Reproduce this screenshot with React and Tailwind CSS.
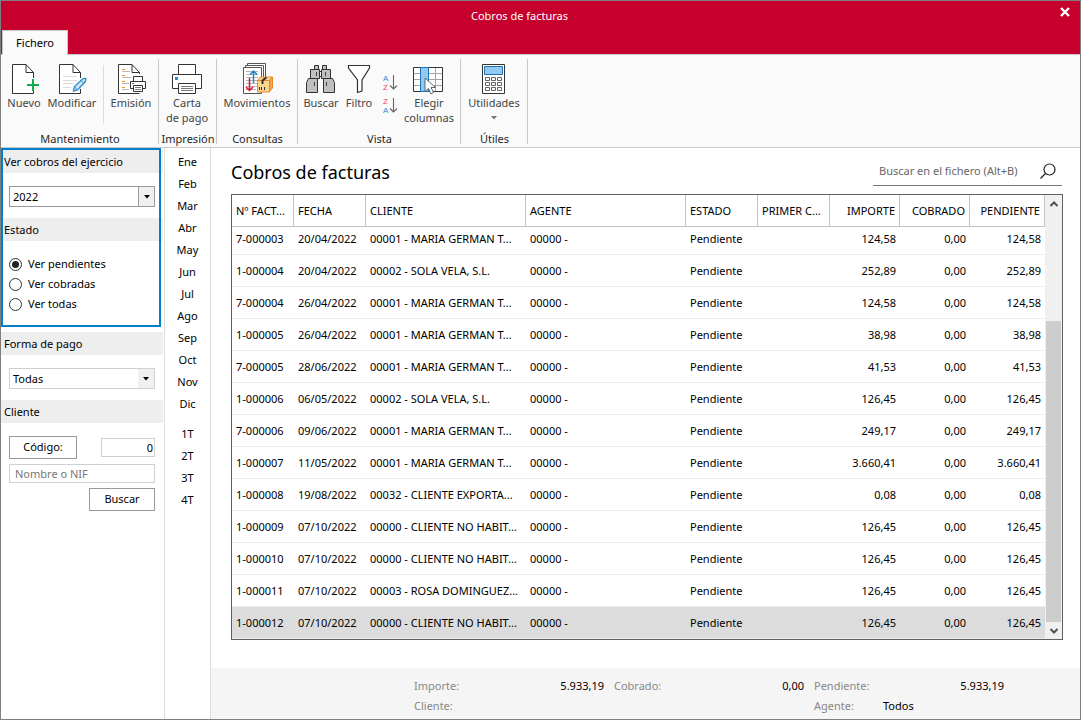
import React, { useState } from 'react';

const MONTHS = ['Ene', 'Feb', 'Mar', 'Abr', 'May', 'Jun', 'Jul', 'Ago', 'Sep', 'Oct', 'Nov', 'Dic'];
const QUARTERS = ['1T', '2T', '3T', '4T'];

const COLUMNS = [
  { label: 'Nº FACT...', width: 'w-[62px]' },
  { label: 'FECHA', width: 'w-[72px]' },
  { label: 'CLIENTE', width: '' },
  { label: 'AGENTE', width: '' },
  { label: 'ESTADO', width: 'w-[72px]' },
  { label: 'PRIMER C...', width: 'w-[72px]' },
  { label: 'IMPORTE', width: 'w-[70px]', right: true },
  { label: 'COBRADO', width: 'w-[70px]', right: true },
  { label: 'PENDIENTE', width: 'w-[75px]', right: true },
];

const ROWS = [
  ['7-000003', '20/04/2022', '00001 - MARIA GERMAN T...', '124,58'],
  ['1-000004', '20/04/2022', '00002 - SOLA VELA, S.L.', '252,89'],
  ['7-000004', '26/04/2022', '00001 - MARIA GERMAN T...', '124,58'],
  ['1-000005', '26/04/2022', '00001 - MARIA GERMAN T...', '38,98'],
  ['7-000005', '28/06/2022', '00001 - MARIA GERMAN T...', '41,53'],
  ['1-000006', '06/05/2022', '00002 - SOLA VELA, S.L.', '126,45'],
  ['7-000006', '09/06/2022', '00001 - MARIA GERMAN T...', '249,17'],
  ['1-000007', '11/05/2022', '00001 - MARIA GERMAN T...', '3.660,41'],
  ['1-000008', '19/08/2022', '00032 - CLIENTE EXPORTA...', '0,08'],
  ['1-000009', '07/10/2022', '00000 - CLIENTE NO HABIT...', '126,45'],
  ['1-000010', '07/10/2022', '00000 - CLIENTE NO HABIT...', '126,45'],
  ['1-000011', '07/10/2022', '00003 - ROSA DOMINGUEZ...', '126,45'],
  ['1-000012', '07/10/2022', '00000 - CLIENTE NO HABIT...', '126,45'],
];

/* Ribbon icons, all on a 32x32 grid */

function Icon({ children }) {
  return (
    <svg viewBox="0 0 32 32" className="size-8 shrink-0" fill="none" aria-hidden="true">
      {children}
    </svg>
  );
}

function NewIcon() {
  return (
    <Icon>
      <path d="M25.5 15V9.5L18 1.5H4.5v29h21V28" fill="#fff" stroke="#333" />
      <path d="M18 1.5v8h7.5" stroke="#333" />
      <path d="M25 16v12M19 22h12" stroke="#17a94e" strokeWidth="2" />
    </Icon>
  );
}

function EditIcon() {
  return (
    <Icon>
      <path d="M24.5 15V9.5L17 1.5H3.5v29h21V26" fill="#fff" stroke="#333" />
      <path d="M17 1.5v8h7.5" stroke="#333" />
      <path d="M7 13.5h14M7 17.5h14M7 20.5h11M7 24.5h8" stroke="#dcdcdc" />
      <path d="M17.5 28l1-4.5 8-7.5q2-1 3.5-.5-.2 2-1 3.5l-7.5 8z" fill="#cfe6f7" stroke="#2b8ccb" strokeWidth="1.3" />
      <path d="M25 17.5l2.5 2.5M18.5 24l2.5 2.5" stroke="#2b8ccb" />
    </Icon>
  );
}

function IssueIcon() {
  return (
    <Icon>
      <path d="M24.5 11V9.5L17 1.5H3.5v29h21" fill="#fff" stroke="#333" />
      <path d="M17 1.5v8h7.5" stroke="#333" />
      <path d="M7 6.5h3M7 12.5h3M7 18.5h3M7 24.5h3" stroke="#ee9a1e" />
      <path d="M7 8.5h8M7 14.5h9M7 20.5h7M7 26.5h7" stroke="#b9b9b9" />
      <path d="M18.5 13.5h9v5h-9zM15.5 18.5h15v7h-15z" fill="#fff" stroke="#333" />
      <path d="M18.5 22.5h9v6h-9z" fill="#fff" stroke="#333" />
      <path d="M20 24.5h6M20 26.5h6" stroke="#777" />
      <path d="M17 20.5h2" stroke="#2b8ccb" />
    </Icon>
  );
}

function PrinterIcon() {
  return (
    <Icon>
      <path d="M7.500 1.500h17v10h-17zM1.500 11.500h29v14h-29z" fill="#fff" stroke="#333" />
      <path d="M7.500 20.500h17v10h-17z" fill="#fff" stroke="#333" />
      <path d="M10 23.500h12M10 25.500h12M10 27.500h12" stroke="#777" />
      <path d="M4 14h3v3H4z" fill="#2b8ccb" />
    </Icon>
  );
}

function MovesIcon() {
  return (
    <Icon>
      <path d="M6.500 .5h18v24h-18z" fill="#fff" stroke="#555" />
      <path d="M4.500 2.500h18v25h-18z" fill="#fff" stroke="#555" />
      <path d="M2.500 4.500h18v26h-18z" fill="#fff" stroke="#555" />
      <path d="M5 8.500h12M5 11.500h12M5 14.500h12M5 17.500h12M5 20.500h12M5 23.500h12M5 26.500h10" stroke="#b5b5b5" />
      <path d="M12.500 20V8M9 11.500l3.500-3.500 3.500 3.500" stroke="#1f85cc" strokeWidth="1.5" />
      <path d="M8.500 15v12.500M5 24l3.500 3.500 3.500-3.500" stroke="#e0122d" strokeWidth="1.5" />
      <path d="M16.500 17.500l3-3.500h12l-3 3.500z" fill="#fbd78c" stroke="#e8862b" />
      <path d="M28.500 17.500l3-3.500v11l-3 3.500z" fill="#f3a552" stroke="#e8862b" />
      <path d="M16.500 17.500h12v11.500h-12z" fill="#fbd78c" stroke="#e8862b" />
      <path d="M25.500 14.500l-4 3v3.500" stroke="#333" strokeWidth="2" />
      <path d="M18.500 24v3M20.500 24v3M23.500 24v3" stroke="#333" />
    </Icon>
  );
}

function BinocularsIcon() {
  return (
    <Icon>
      <g fill="#bfbfbf" stroke="#333">
        <path d="M9.500 2.500h4v4h-4zM17.500 2.500h4v4h-4z" />
        <path d="M14 8.500h3v5h-3z" fill="#fff" />
        <path d="M5.500 6.500h9v9h-9zM16.500 6.500h9v9h-9z" />
        <path d="M3.500 15.500h9v14h-11v-10zM18.500 15.500h9l2 4v10h-11z" />
      </g>
      <path d="M11.500 9v4M20.500 9v4M9.500 19v4M21.500 19v4" stroke="#444" />
    </Icon>
  );
}

function FilterIcon() {
  return (
    <Icon>
      <path d="M5.500 2.500h21v2.500l-7.500 12v11l-4.500 1.500V17L5.500 5z" fill="#fff" stroke="#333" strokeWidth="1.2" />
    </Icon>
  );
}

function SortIcon({ desc }) {
  return (
    <svg viewBox="0 0 16 20" className="h-5 w-4 font-['Liberation_Sans',sans-serif] text-[8px]" fill="none" aria-hidden="true">
      <text x="1" y={desc ? 17 : 8} fill="#2b8ccb">A</text>
      <text x="1" y={desc ? 8 : 17} fill="#ee4a55">Z</text>
      <path d="M11.500 2v14M8 12.500l3.500 3.500 3.500-3.500" stroke="#666" strokeWidth="1.1" />
    </svg>
  );
}

function ColumnsIcon() {
  return (
    <Icon>
      <path d="M.500 4.500h29.500v24H.500z" fill="#fff" />
      <path d="M1 10.500h29M1 16.500h29M1 22.500h29M22.500 5v23" stroke="#a5a5a5" />
      <path d="M.500 4.500h29v24H.500z" stroke="#333" />
      <path d="M7.500 4.500h8v24h-8z" fill="#92c9f0" stroke="#1d73b5" />
      <path d="M12 15v13.500l3.500-3 2.500 5.500 2.500-1.500-2.500-5h4.500z" fill="#fff" stroke="#666" />
    </Icon>
  );
}

function CalculatorIcon() {
  return (
    <Icon>
      <path d="M4.500 1.500h22v29h-22z" fill="#fff" stroke="#333" />
      <path d="M6.500 3.500h18v8h-18z" fill="#92c9f0" stroke="#1d73b5" />
      {[14.5, 19.5, 24.5].map((y) => (
        <path
          key={y}
          d={`M7.500 ${y}h4v3h-4zM13.500 ${y}h4v3h-4zM19.500 ${y}h4v3h-4z`}
          stroke="#555"
          strokeWidth=".9"
        />
      ))}
    </Icon>
  );
}

function Chevron({ up }) {
  return (
    <svg viewBox="0 0 10 8" className="h-2 w-2.5" fill="none" aria-hidden="true">
      <path d={up ? 'M1.500 6L5 2.500 8.500 6' : 'M1.500 2L5 5.500 8.500 2'} stroke="#505050" strokeWidth="2" />
    </svg>
  );
}

/* Ribbon */

function RibbonButton({ icon, label, width, children }) {
  return (
    <button type="button" className={`flex flex-col items-center whitespace-pre text-[#444] leading-[15px] ${width}`}>
      {icon}
      <span>{label}</span>
      {children}
    </button>
  );
}

function RibbonGroup({ title, width, children }) {
  return (
    <div className={`flex shrink-0 flex-col justify-between border-r border-[#c8c8c8] ${width}`}>
      <div className="flex pt-1">{children}</div>
      <div className="pl-px text-center leading-[11px] whitespace-nowrap text-[#262626]">{title}</div>
    </div>
  );
}

function Ribbon() {
  return (
    <div className="flex h-[93px] border-b border-[#c8c8c8] bg-[#fafafa] pt-1 pb-[3px]">
      <RibbonGroup title="Mantenimiento" width="w-[158px]">
        <RibbonButton icon={<NewIcon />} label="Nuevo" width="w-[46px]" />
        <RibbonButton icon={<EditIcon />} label="Modificar" width="w-[50px]" />
        <div className="mt-0.5 mr-[3px] ml-1.5 h-[59px] border-l border-[#dcdcdc]" />
        <RibbonButton icon={<IssueIcon />} label="Emisión" width="w-12" />
      </RibbonGroup>
      <RibbonGroup title="Impresión" width="w-[58px]">
        <RibbonButton icon={<PrinterIcon />} label={'Carta\nde pago'} width="w-14" />
      </RibbonGroup>
      <RibbonGroup title="Consultas" width="w-[81px]">
        <RibbonButton icon={<MovesIcon />} label="Movimientos" width="w-20" />
      </RibbonGroup>
      <RibbonGroup title="Vista" width="w-[163px]">
        <RibbonButton icon={<BinocularsIcon />} label="Buscar" width="w-[46px]" />
        <RibbonButton icon={<FilterIcon />} label="Filtro" width="w-[30px]" />
        <div className="flex w-[30px] flex-col items-center gap-[3px] pt-2.5 pl-0.5">
          <button type="button" aria-label="Orden ascendente"><SortIcon /></button>
          <button type="button" aria-label="Orden descendente"><SortIcon desc /></button>
        </div>
        <RibbonButton icon={<ColumnsIcon />} label={'Elegir\ncolumnas'} width="w-[50px]" />
      </RibbonGroup>
      <RibbonGroup title="Útiles" width="w-[67px]">
        <RibbonButton icon={<CalculatorIcon />} label="Utilidades" width="w-[66px]">
          <svg viewBox="0 0 6 4" className="mt-1.5 h-1 w-1.5" aria-hidden="true">
            <path d="M0 0h6L3 3.500z" fill="#777" />
          </svg>
        </RibbonButton>
      </RibbonGroup>
    </div>
  );
}

/* Sidebar */

function SectionTitle({ children }) {
  return <h2 className="mr-px h-[23px] bg-[#eee] pl-[3px] leading-[23px]">{children}</h2>;
}

function SelectBox({ label, options, className, arrow }) {
  return (
    <div className={`relative mr-[9px] ml-2 h-[21px] border ${className}`}>
      <select aria-label={label} className="h-full w-full appearance-none bg-white pl-[3px] leading-[19px]">
        {options.map((option) => (
          <option key={option}>{option}</option>
        ))}
      </select>
      <span className={`pointer-events-none absolute inset-y-0 right-0 flex w-4 items-center justify-center bg-[#f0f0f0] ${arrow}`}>
        <svg viewBox="0 0 6 4" className="h-1 w-1.5" aria-hidden="true">
          <path d="M0 0h6L3 3.500z" fill="#000" />
        </svg>
      </span>
    </div>
  );
}

function Sidebar() {
  const [status, setStatus] = useState('Ver pendientes');

  return (
    <aside className="w-[164px] shrink-0 border-r border-[#dcdcdc]">
      <div className="relative h-[184px] pt-0.5">
        <SectionTitle>Ver cobros del ejercicio</SectionTitle>
        <div className="pt-[13px] pb-[11px]">
          <SelectBox label="Ejercicio" options={['2022']} className="border-[#9a9a9a]" arrow="border-l border-[#9a9a9a]" />
        </div>
        <SectionTitle>Estado</SectionTitle>
        <div className="flex flex-col pt-[13px] pl-2">
          {['Ver pendientes', 'Ver cobradas', 'Ver todas'].map((option) => (
            <label key={option} className="flex h-5 items-center gap-1.5">
              <input
                type="radio"
                name="estado"
                checked={status === option}
                onChange={() => setStatus(option)}
                className="flex size-[13px] appearance-none items-center justify-center rounded-full border border-[#333] bg-white before:size-[7px] before:rounded-full checked:before:bg-[#222]"
              />
              {option}
            </label>
          ))}
        </div>
        {/* Highlight frame over the exercise and status filters */}
        <div className="pointer-events-none absolute top-0 left-0 h-[179px] w-40 border-2 border-[#0080c8]" />
      </div>

      <SectionTitle>Forma de pago</SectionTitle>
      <div className="pt-[13px] pb-[11px]">
        <SelectBox label="Forma de pago" options={['Todas']} className="border-[#d0d0d0]" arrow="" />
      </div>
      <SectionTitle>Cliente</SectionTitle>
      <div className="flex flex-col gap-[5px] pt-[13px] pr-[9px] pl-2">
        <div className="flex items-center justify-between">
          <button type="button" className="h-[23px] w-[68px] border border-[#999] bg-white">Código:</button>
          <input aria-label="Código" defaultValue="0" className="h-[19px] w-[54px] border border-[#d0d0d0] px-px text-right" />
        </div>
        <input
          aria-label="Nombre o NIF"
          placeholder="Nombre o NIF"
          className="h-[19px] w-full border border-[#d0d0d0] px-[5px] placeholder:text-[#777]"
        />
        <button type="button" className="h-[23px] w-[66px] self-end border border-[#999] bg-white">Buscar</button>
      </div>
    </aside>
  );
}

function MonthBar() {
  return (
    <nav className="flex w-[46px] shrink-0 flex-col border-r border-[#dcdcdc] pt-[3px]">
      {MONTHS.map((month) => (
        <button key={month} type="button" className="h-[22px]">{month}</button>
      ))}
      <div className="flex flex-col pt-2">
        {QUARTERS.map((quarter) => (
          <button key={quarter} type="button" className="h-[22px]">{quarter}</button>
        ))}
      </div>
    </nav>
  );
}

/* Invoice grid */

function InvoiceTable() {
  return (
    <div className="flex border border-[#606060]">
      <table className="w-full min-w-0 flex-1 table-fixed border-separate border-spacing-0">
        <thead>
          <tr className="h-8">
            {COLUMNS.map((col) => (
              <th
                key={col.label}
                className={`border-r border-b border-[#c4c4c4] px-1 pt-0.5 font-normal whitespace-nowrap ${col.width} ${col.right ? 'text-right' : 'text-left'}`}
              >
                {col.label}
              </th>
            ))}
          </tr>
        </thead>
        <tbody className="[&_td]:overflow-hidden [&_td]:border-b [&_td]:border-[#ececec] [&_td]:px-1 [&_td]:pt-0.5 [&_td]:whitespace-nowrap">
          {ROWS.map(([number, date, client, amount], i) => (
            <tr
              key={number}
              className={`h-8 first:h-7 first:[&_td]:pb-1 ${i === ROWS.length - 1 ? 'bg-[#dcdcdc]' : ''}`}
            >
              <td>{number}</td>
              <td>{date}</td>
              <td>{client}</td>
              <td>00000 -</td>
              <td>Pendiente</td>
              <td></td>
              <td className="text-right">{amount}</td>
              <td className="text-right">0,00</td>
              <td className="text-right">{amount}</td>
            </tr>
          ))}
        </tbody>
      </table>
      <div className="flex w-[17px] flex-col bg-[#f0f0f0]">
        <button type="button" aria-label="Subir" className="flex h-[18px] items-center justify-center"><Chevron up /></button>
        <div className="flex flex-1 flex-col justify-end pr-px pl-px">
          <div className="h-[73.5%] bg-[#cdcdcd]" />
        </div>
        <button type="button" aria-label="Bajar" className="flex h-[17px] items-center justify-center"><Chevron /></button>
      </div>
    </div>
  );
}

function Totals() {
  return (
    <footer className="mt-auto grid h-[51px] grid-cols-[190px_190px_190px] content-start gap-x-2.5 bg-[#f5f5f5] pt-2 pl-[203px] leading-5 text-[#888]">
      <div className="flex justify-between">Importe:<span className="text-black">5.933,19</span></div>
      <div className="flex justify-between">Cobrado:<span className="text-black">0,00</span></div>
      <div className="flex justify-between">Pendiente:<span className="text-black">5.933,19</span></div>
      <div>Cliente:</div>
      <div className="col-start-3 flex"><span className="w-[69px]">Agente:</span><span className="text-black">Todos</span></div>
    </footer>
  );
}

function App() {
  return (
    <div className="flex min-h-screen flex-col border border-[#7f7f7f] bg-white font-['Noto_Sans',sans-serif] text-[11px] text-black">
      <header className="relative flex h-[54px] flex-col justify-between border-b border-[#c8c8c8] bg-[#c8002d]">
        <h1 className="pt-1.5 pr-[42px] text-center leading-[18px] text-white">Cobros de facturas</h1>
        <button type="button" className="-mb-px ml-px h-[25px] w-[66px] self-start border border-b-0 border-[#c8c8c8] bg-[#fafafa]">
          Fichero
        </button>
        <button type="button" aria-label="Cerrar" className="absolute top-1.5 right-2.5">
          <svg viewBox="0 0 10 10" className="size-2.5" fill="none" aria-hidden="true">
            <path d="M1 1l8 8M9 1L1 9" stroke="#fff" strokeWidth="2.4" />
          </svg>
        </button>
      </header>

      <Ribbon />

      <div className="flex flex-1">
        <Sidebar />
        <MonthBar />
        <main className="flex min-w-0 flex-1 flex-col">
          <div className="flex h-[46px] items-start justify-between pr-[18px] pl-5">
            <h2 className="pt-2.5 text-lg leading-7">Cobros de facturas</h2>
            <div className="mt-2 flex h-[30px] w-[189px] items-center border-b border-[#777] pr-1.5 pl-1.5">
              <input
                type="search"
                aria-label="Buscar en el fichero"
                placeholder="Buscar en el fichero (Alt+B)"
                className="min-w-0 flex-1 pt-px placeholder:text-[#666]"
              />
              <button type="button" aria-label="Buscar">
                <svg viewBox="0 0 16 16" className="size-4" fill="none" stroke="#222" strokeWidth="1.2" aria-hidden="true">
                  <circle cx="9.5" cy="6.5" r="5.5" />
                  <path d="M5.5 10.500L.5 15.500" />
                </svg>
              </button>
            </div>
          </div>
          <div className="pr-[17px] pb-7 pl-5">
            <InvoiceTable />
          </div>
          <Totals />
        </main>
      </div>
    </div>
  );
}

export default App;
